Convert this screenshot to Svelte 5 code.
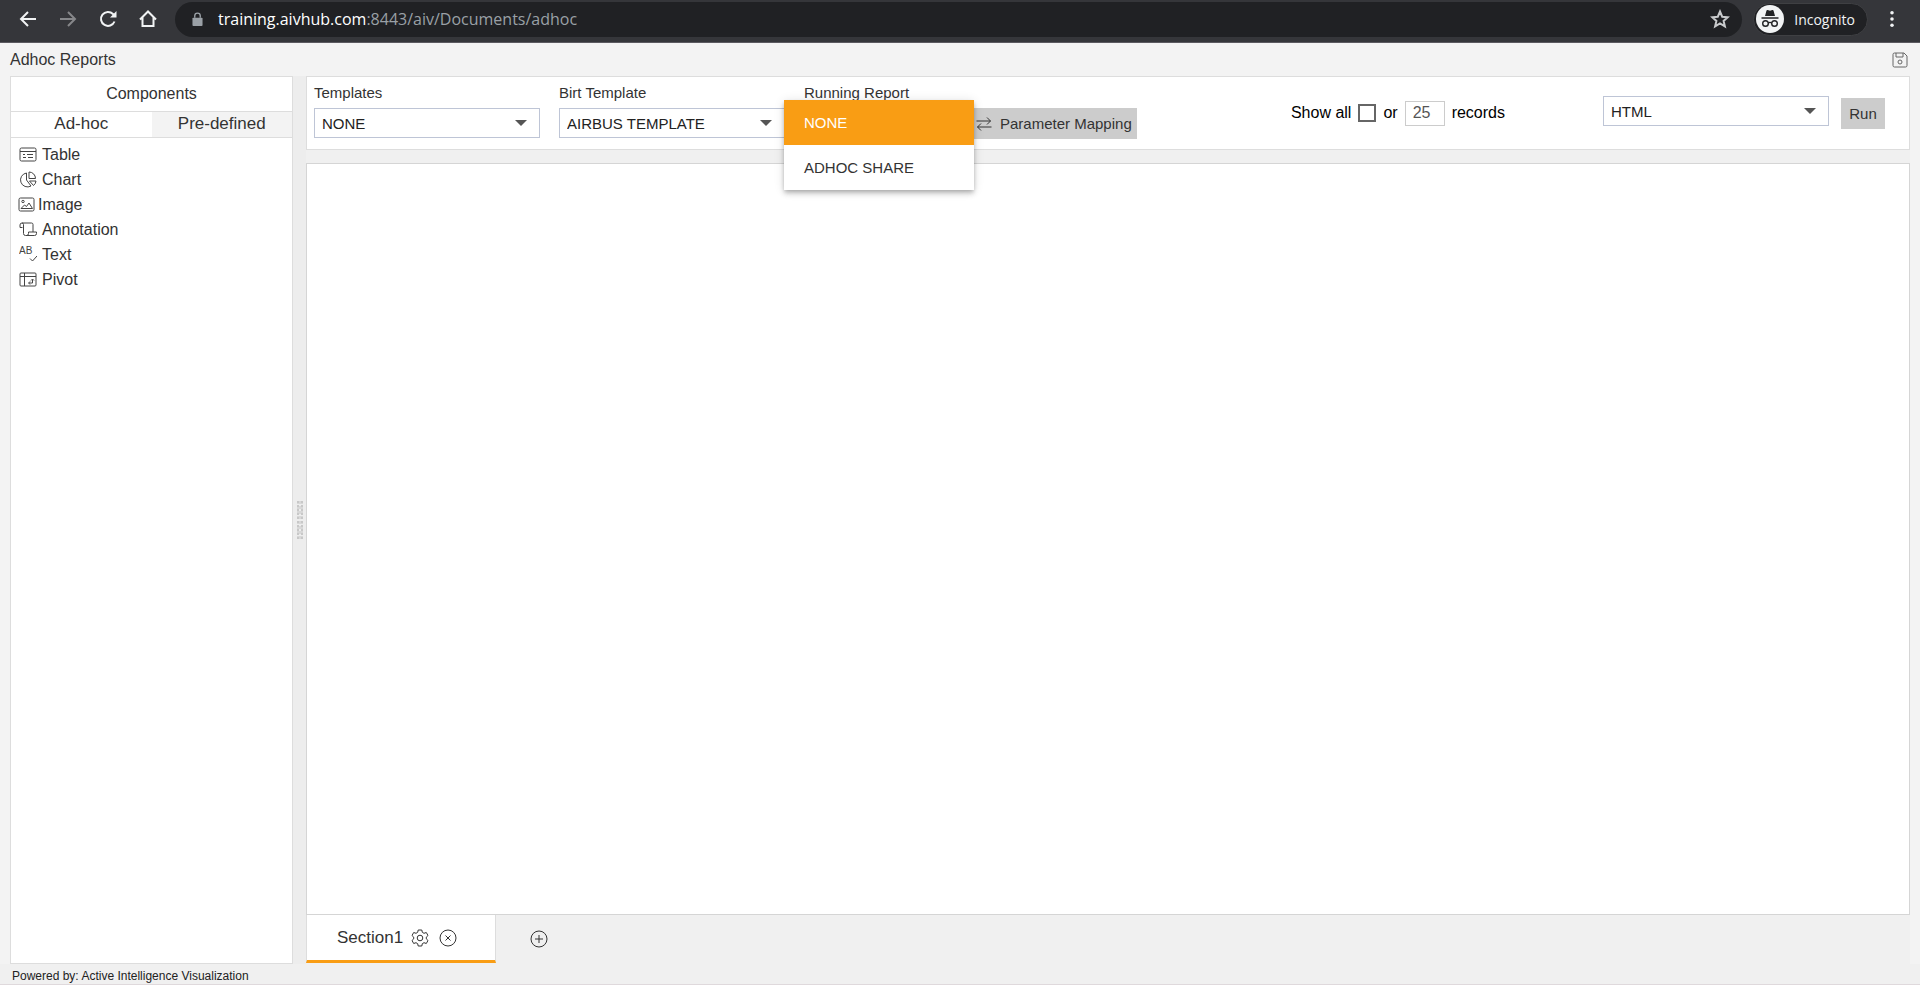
<script>
  const components = [
    { id: 'table', label: 'Table', svg: '<rect x="1" y="2" width="16" height="13" rx="1.5"/><path d="M1 5.5h16M4 8.5h2M8 8.5h6M4 11.5h3M9 11.5h5"/>' },
    { id: 'chart', label: 'Chart', svg: '<path d="M7.5 2A7 7 0 1 0 12 15L7.5 9z"/><path d="M10 1v6.5h6.5A6.5 6.5 0 0 0 10 1z"/><path d="M10.5 10H17a6.5 6.5 0 0 1-2.5 4.5z"/>' },
    { id: 'image', label: 'Image', tight: true, svg: '<rect x="1" y="2" width="15" height="13" rx="1.5"/><circle cx="5" cy="5.5" r="1.2"/><path d="M3 12.5l3.500-3.500 2 1.500L11 7l3.500 5.500z"/>' },
    { id: 'annotation', label: 'Annotation', svg: '<path d="M3.5 6.500H1V4a2 2 0 0 1 2-2h9.500q1.500 0 1.500 1.500V11"/><path d="M3 2q1.500 0 1.500 1.500V12.500q0 2 2 2h9q2 0 2-2V11H9.500v1.500q0 2-2 2"/>' },
    { id: 'text', label: 'Text', svg: '<text x="0" y="8" font-size="10" fill="currentColor" stroke="none">AB</text><path d="M11 12.500l2.500 2.500 4.500-5"/>' },
    { id: 'pivot', label: 'Pivot', svg: '<rect x="1" y="2" width="16" height="13" rx="1"/><path d="M1 5.5h16M5.5 2v13M10 12h3.500V8.500M12 9.500l1.500-1.500L15 9.500M11 10.500L9.500 12l1.500 1.500"/>' },
  ];

  const reports = ['NONE', 'ADHOC SHARE'];

  let activeTab = $state('adhoc');
  let report = $state('NONE');
  let showAll = $state(false);
  let records = $state('25');
</script>

<div class="page">
  <header class="browser">
    <nav class="nav-buttons">
      <button aria-label="Back">
        <svg viewBox="0 0 20 20"><path d="M18 10H3M10 3l-7 7 7 7"/></svg>
      </button>
      <button class="dim" aria-label="Forward">
        <svg viewBox="0 0 20 20"><path d="M2 10h15M10 3l7 7-7 7"/></svg>
      </button>
      <button aria-label="Reload">
        <svg viewBox="0 0 20 20"><path d="M16.5 12.5A7 7 0 1 1 15 5l2 2"/><path d="M18.5 2v6.5H12z" fill="currentColor" stroke="none"/></svg>
      </button>
      <button aria-label="Home">
        <svg viewBox="0 0 20 20"><path d="M2 10.5L10 2.5l8 8M4.5 8.5V17h11V8.500"/></svg>
      </button>
    </nav>
    <div class="address">
      <svg class="lock" viewBox="0 0 12 16"><rect x="0.5" y="6" width="11" height="9" rx="1"/><path d="M3 6V4a3 3 0 0 1 6 0v2" fill="none" stroke="currentColor" stroke-width="1.5"/></svg>
      <span class="url"><b>training.aivhub.com</b>:8443/aiv/Documents/adhoc</span>
      <button class="star" aria-label="Bookmark">
        <svg viewBox="0 0 20 20"><path d="M10 2.5l2.200 5.200 5.600.5-4.200 3.700 1.300 5.500-4.900-2.900-4.900 2.900 1.300-5.500L2.200 8.200l5.600-.5z"/></svg>
      </button>
    </div>
    <div class="incognito">
      <svg viewBox="0 0 28 28">
        <circle cx="14" cy="14" r="14" fill="#f1f3f4"/>
        <path d="M9 11l1.500-5.500q.4-.8 1.200-.5l2.300.7 2.300-.7q.8-.3 1.200.5L19 11z" fill="#202124"/>
        <path d="M5.5 13h17" stroke="#202124" stroke-width="1.5"/>
        <g fill="none" stroke="#202124" stroke-width="1.4"><circle cx="9.5" cy="18.5" r="2.8"/><circle cx="18.5" cy="18.5" r="2.8"/><path d="M12.3 18q1.700-1.200 3.400 0"/></g>
      </svg>
      <span>Incognito</span>
    </div>
    <button class="more" aria-label="Menu">
      <svg viewBox="0 0 4 18"><circle cx="2" cy="2" r="2"/><circle cx="2" cy="9" r="2"/><circle cx="2" cy="16" r="2"/></svg>
    </button>
  </header>

  <div class="title-row">
    <h1>Adhoc Reports</h1>
    <button class="icon-btn" aria-label="Save">
      <svg class="save" viewBox="0 0 16 16"><path d="M1 2.5Q1 1 2.5 1H12l3 3v9.500q0 1.500-1.500 1.500h-11Q1 15 1 13.500zM4 1v4h7V1"/><circle cx="8" cy="10" r="2"/></svg>
    </button>
  </div>

  <main class="workspace">
    <aside class="sidebar">
      <h2>Components</h2>
      <div class="tabs">
        <button class:active={activeTab === 'adhoc'} onclick={() => (activeTab = 'adhoc')}>Ad-hoc</button>
        <button class:active={activeTab === 'predefined'} onclick={() => (activeTab = 'predefined')}>Pre-defined</button>
      </div>
      <ul class="components">
        {#each components as item (item.id)}
          <li class:tight={item.tight}>
            <svg viewBox="0 0 18 17">{@html item.svg}</svg>
            <span>{item.label}</span>
          </li>
        {/each}
      </ul>
    </aside>

    <div class="splitter"><span class="grip"></span></div>

    <section class="content">
      <div class="toolbar">
        <div class="field">
          <label for="templates">Templates</label>
          <div class="select">
            <select id="templates"><option>NONE</option></select>
          </div>
        </div>
        <div class="field">
          <label for="birt">Birt Template</label>
          <div class="select">
            <select id="birt"><option>AIRBUS TEMPLATE</option></select>
          </div>
        </div>
        <div class="field running">
          <label for="running">Running Report</label>
          <div class="select">
            <select id="running" bind:value={report}>
              {#each reports as name}
                <option>{name}</option>
              {/each}
            </select>
          </div>
          <div class="menu" role="listbox" aria-label="Running Report">
            {#each reports as name}
              <button role="option" aria-selected={report === name} class:selected={report === name} onclick={() => (report = name)}>{name}</button>
            {/each}
          </div>
        </div>
        <button class="grey mapping">
          <svg viewBox="0 0 16 16"><path d="M.5 5h14M11 1.5L14.5 5 11 8.500M15.500 11h-14M5 7.500L1.500 11 5 14.500"/></svg>
          Parameter Mapping
        </button>

        <div class="records">
          <label for="show-all">Show all</label>
          <input id="show-all" type="checkbox" bind:checked={showAll} />
          <label for="count">or</label>
          <input id="count" type="text" bind:value={records} />
          <span>records</span>
        </div>

        <div class="select output">
          <select aria-label="Output format"><option>HTML</option></select>
        </div>
        <button class="grey run">Run</button>
      </div>

      <div class="canvas"></div>

      <div class="sections">
        <div class="section-tab">
          <span>Section1</span>
          <button class="icon-btn" aria-label="Section settings">
            <svg viewBox="0 0 18 18"><path d="M7.2 1h3.600l.5 2.300 1.700 1 2.300-.8 1.700 3-1.700 1.600v1.800l1.700 1.600-1.700 3-2.300-.8-1.700 1-.5 2.300H7.200l-.5-2.300-1.700-1-2.300.8-1.700-3 1.700-1.600V8.100L1 6.500l1.700-3 2.300.8 1.700-1z"/><circle cx="9" cy="9" r="2.8"/></svg>
          </button>
          <button class="icon-btn" aria-label="Close section">
            <svg viewBox="0 0 18 18"><circle cx="9" cy="9" r="8"/><path d="M6.5 6.5l5 5M11.5 6.5l-5 5"/></svg>
          </button>
        </div>
        <button class="icon-btn add" aria-label="Add section">
          <svg viewBox="0 0 18 18"><circle cx="9" cy="9" r="8"/><path d="M9 5v8M5 9h8"/></svg>
        </button>
      </div>
    </section>
  </main>

  <footer>Powered by: Active Intelligence Visualization</footer>
</div>

<style>
  :global(body) {
    margin: 0;
  }

  .page {
    display: flex;
    flex-direction: column;
    min-height: 100vh;
    background: #f3f3f3;
    color: #333;
    font-family: "Liberation Sans", Arial, sans-serif;
    font-size: 16px;
  }

  .page, .page * {
    box-sizing: border-box;
  }

  button, input, select {
    margin: 0;
    padding: 0;
    border: 0;
    background: none;
    color: inherit;
    font: inherit;
  }

  button {
    cursor: pointer;
  }

  svg {
    display: block;
    flex-shrink: 0;
    fill: none;
    stroke: currentColor;
    stroke-width: 1;
  }

  h1, h2 {
    margin: 0;
    font-size: 16px;
    font-weight: 400;
  }

  /* browser bar */
  .browser {
    display: flex;
    align-items: center;
    height: 43px;
    padding: 0 26px 4px 18px;
    background: #35363a;
    border-bottom: 1px solid #5b5a60;
    color: #f1f3f4;
    font-family: "Open Sans", "Segoe UI", sans-serif;
  }

  .nav-buttons {
    display: flex;
    gap: 20px;
    margin-right: 17px;
  }

  .nav-buttons svg {
    width: 20px;
    height: 20px;
    stroke-width: 2;
  }

  .dim {
    color: #86878a;
  }

  .address {
    display: flex;
    flex: 1;
    align-items: center;
    height: 35px;
    padding: 0 12px 0 17px;
    border-radius: 18px;
    background: #202124;
    color: #9aa0a6;
  }

  .lock {
    width: 11px;
    height: 15px;
    margin-right: 15px;
    fill: currentColor;
    stroke: none;
  }

  .url {
    flex: 1;
  }

  .url b {
    color: #fff;
    font-weight: 400;
  }

  .star svg {
    width: 20px;
    height: 20px;
    color: #c8cacc;
    stroke-width: 2;
  }

  .incognito {
    display: flex;
    align-items: center;
    gap: 10px;
    height: 33px;
    margin: 0 22px 0 11px;
    padding: 0 12px 0 2px;
    border: 1px solid #3f4043;
    border-radius: 17px;
    background: #202124;
    font-size: 14px;
  }

  .incognito svg {
    width: 28px;
    height: 28px;
    stroke: none;
  }

  .more svg {
    width: 4px;
    height: 16px;
    fill: currentColor;
    stroke: none;
  }

  /* page */
  .title-row {
    display: flex;
    align-items: center;
    justify-content: space-between;
    height: 33px;
    padding: 0 12px 0 10px;
  }

  .save {
    width: 16px;
    height: 16px;
    color: #666;
  }

  .workspace {
    display: flex;
    flex: 1;
    padding: 0 10px;
  }

  .sidebar {
    width: 283px;
    border: 1px solid #ddd;
    background: #fff;
  }

  .sidebar h2 {
    line-height: 34px;
    text-align: center;
  }

  .tabs {
    display: grid;
    grid-template-columns: 1fr 1fr;
    border: solid #ddd;
    border-width: 1px 0;
  }

  .tabs button {
    padding-bottom: 1px;
    background: #f3f3f3;
    font-size: 17px;
    line-height: 24px;
  }

  .tabs .active {
    background: #fff;
  }

  .components {
    margin: 0;
    padding: 4px 8px;
    list-style: none;
  }

  .components li {
    display: flex;
    align-items: center;
    gap: 5px;
    line-height: 25px;
  }

  .components .tight {
    gap: 2px;
    margin-left: -1px;
  }

  .components svg {
    width: 18px;
    height: 17px;
    color: #444;
  }

  .splitter {
    display: flex;
    align-items: center;
    justify-content: center;
    width: 13px;
    background: #ededed;
  }

  .grip {
    width: 6px;
    height: 38px;
    border: dotted #c8c8c8;
    border-width: 0 2px;
    background: repeating-linear-gradient(#d8d8d8 0 3px, transparent 3px 5px);
  }

  .content {
    display: flex;
    flex: 1;
    flex-direction: column;
    background: #f0f0f0;
  }

  .toolbar {
    display: flex;
    align-items: center;
    height: 74px;
    margin-bottom: 13px;
    padding: 0 24px 0 7px;
    border: 1px solid #ddd;
    background: #fff;
    font-size: 15px;
  }

  .field {
    margin: 0 19px 4px 0;
  }

  .field label {
    display: block;
    padding-bottom: 7px;
    line-height: 17px;
  }

  .select {
    position: relative;
    width: 226px;
    height: 30px;
  }

  .select::after {
    content: "";
    position: absolute;
    top: 12px;
    right: 13px;
    border: solid transparent;
    border-width: 6px 6px 0;
    border-top-color: #555;
    pointer-events: none;
  }

  select {
    width: 100%;
    height: 100%;
    padding: 0 7px;
    border: 1px solid #bec5d6;
    background: #fff;
    color: #222;
    appearance: none;
  }

  .running {
    position: relative;
    margin-right: 8px;
  }

  .running .select {
    width: 155px;
  }

  .menu {
    position: absolute;
    z-index: 1;
    top: 16px;
    left: -20px;
    width: 190px;
    background: #fff;
    box-shadow: 0 2px 4px -1px rgba(0, 0, 0, 0.2), 0 4px 5px rgba(0, 0, 0, 0.14), 0 1px 10px rgba(0, 0, 0, 0.12);
  }

  .menu button {
    display: block;
    width: 100%;
    padding: 0 20px;
    line-height: 45px;
    text-align: left;
  }

  .menu .selected {
    background: #f99d14;
    color: #fff;
  }

  .grey {
    background: #ccc;
    height: 31px;
    color: #333;
  }

  .mapping {
    display: flex;
    align-items: center;
    align-self: flex-end;
    gap: 8px;
    margin-bottom: 10px;
    padding: 0 5px 0 9px;
  }

  .mapping svg {
    width: 16px;
    height: 16px;
  }

  .records {
    display: flex;
    align-items: center;
    gap: 7px;
    margin: 0 98px 0 auto;
    color: #000;
    font-size: 16px;
  }

  .records input {
    border: 1px solid #ccc;
    background: #fff;
  }

  .records input[type="checkbox"] {
    width: 18px;
    height: 18px;
    border: 2px solid #666;
    appearance: none;
  }

  .records input[type="checkbox"]:checked {
    background: #666;
  }

  .records input[type="text"] {
    width: 40px;
    height: 25px;
    padding: 0 7px;
    color: #555;
  }

  .output {
    margin-bottom: 4px;
  }

  .run {
    width: 44px;
    margin-left: 12px;
  }

  .canvas {
    flex: 1;
    border: 1px solid #d5d5d5;
    background: #fff;
  }

  .sections {
    display: flex;
    align-items: center;
    height: 49px;
    padding-bottom: 1px;
  }

  .section-tab {
    display: flex;
    align-items: center;
    gap: 10px;
    width: 190px;
    height: 100%;
    padding-left: 30px;
    border: solid #ddd;
    border-width: 0 1px;
    border-bottom: 3px solid #f99d14;
    background: #fff;
    font-size: 17px;
  }

  .section-tab span {
    margin-right: -2px;
  }

  .sections svg {
    width: 18px;
    height: 18px;
  }

  .add {
    margin-left: 34px;
  }

  footer {
    height: 21px;
    padding-left: 12px;
    border-bottom: 1px solid #dfd9dc;
    background: #f0f0f0;
    color: #222;
    font-size: 12px;
    line-height: 24px;
  }
</style>
